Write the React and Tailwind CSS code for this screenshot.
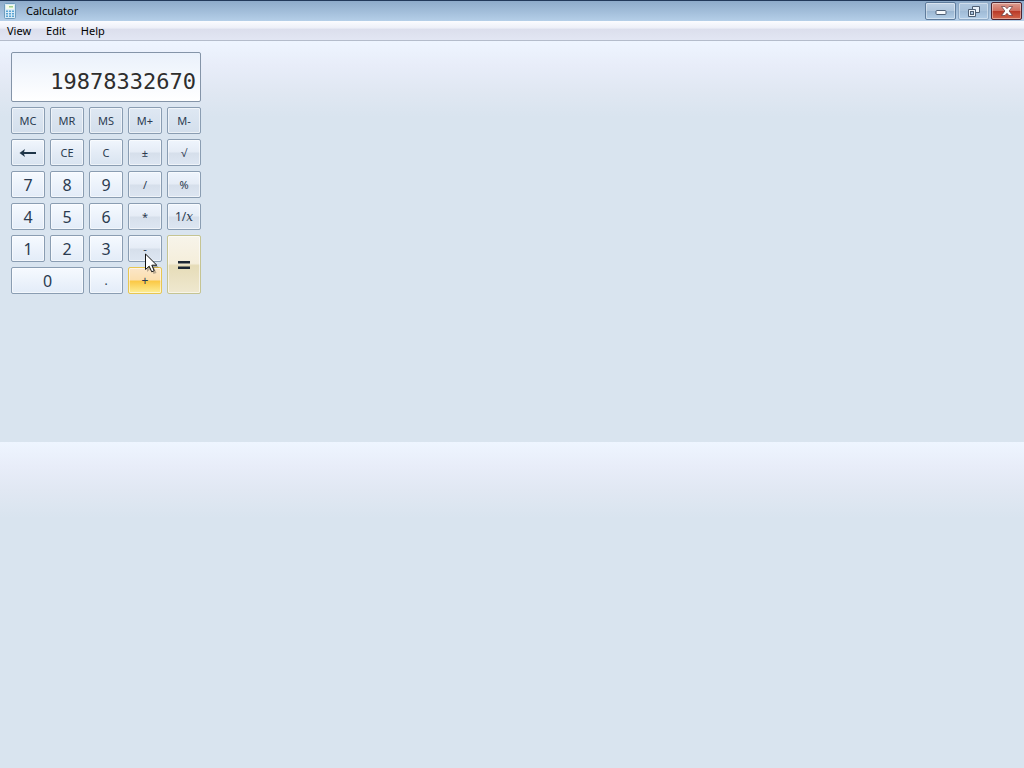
import React, { useState } from "react";

const memory = "text-[11px] border-[#8a9db2] bg-linear-to-b from-[#dfe8f3] to-[#d3dfec]";
const command =
  "text-[11px] border-[#8a9db2] bg-linear-to-b from-[#f1f6fd] from-0% via-[#e4ecf6] via-50% to-[#d9e4f0] to-100%";
const operator =
  "text-[11px] border-[#8a9db2] bg-[linear-gradient(to_bottom,#eff5fd_0%,#e5ecf6_48%,#d6dfeb_52%,#dde6f2_100%)]";
const digit = "text-base border-[#8a9db2] bg-linear-to-b from-[#f6faff] to-[#e3ecf8]";
const point = "text-xs border-[#8a9db2] bg-linear-to-b from-[#f6faff] to-[#e3ecf8]";
const hot =
  "text-xs border-[#e8c650] bg-[linear-gradient(to_bottom,#fbe6c8_0%,#fbdfae_48%,#fbc844_52%,#fdee96_100%)]";
const equals =
  "text-xl border-[#c5c492] bg-[linear-gradient(to_bottom,#f7f4ea_0%,#f5eedb_48%,#e6dcb8_52%,#efe8cf_100%)]";

function BackArrow() {
  return (
    <svg width="18" height="10" viewBox="0 0 18 10" aria-hidden="true">
      <path d="M0.500 5 L6 1 L5 4 H17 V6 H5 L6 9 Z" fill="#1f3548" />
    </svg>
  );
}

function Pointer() {
  return (
    <svg
      className="pointer-events-none absolute top-[18px] left-[17px] z-10"
      width="15"
      height="23"
      viewBox="0 0 15 23"
      aria-hidden="true"
    >
      <path d="M2 3 V19 L6 15.5 L8.5 21 L11.5 20 L9 14.5 H14 Z" fill="#000" opacity="0.25" />
      <path
        d="M0.5 1 V16.5 L4.2 13.2 L6.7 18.8 L9.2 17.7 L6.8 12.2 H11.8 Z"
        fill="#fff"
        stroke="#111"
        strokeWidth="1"
        strokeLinejoin="round"
      />
    </svg>
  );
}

const keys = [
  { label: "MC", look: memory },
  { label: "MR", look: memory },
  { label: "MS", look: memory },
  { label: "M+", look: memory },
  { label: "M-", look: memory },
  { label: <BackArrow />, name: "Backspace", look: command },
  { label: "CE", look: command },
  { label: "C", look: command },
  { label: "±", look: operator },
  { label: "√", look: operator },
  { label: "7", look: digit },
  { label: "8", look: digit },
  { label: "9", look: digit },
  { label: "/", look: operator },
  { label: "%", look: operator },
  { label: "4", look: digit },
  { label: "5", look: digit },
  { label: "6", look: digit },
  { label: "*", look: operator },
  {
    label: (
      <span className="text-xs">
        1/<i className="font-['DejaVu_Serif',serif]">x</i>
      </span>
    ),
    name: "Reciprocal",
    look: operator,
  },
  { label: "1", look: digit },
  { label: "2", look: digit },
  { label: "3", look: digit },
  { label: "-", look: operator, pointed: true },
  {
    label: (
      <svg width="12" height="8" viewBox="0 0 12 8" aria-hidden="true">
        <path d="M0 0H12V2.500H0ZM0 5.500H12V8H0Z" fill="#1c2633" />
      </svg>
    ),
    name: "Equals",
    look: equals,
    span: "row-span-2",
  },
  { label: "0", look: digit, span: "col-span-2" },
  { label: ".", look: point },
  { label: "+", look: hot },
];

function Key({ label, name, look, span = "", pointed }) {
  return (
    <div className={`relative flex ${span}`}>
      <button
        type="button"
        aria-label={name}
        className={`flex flex-1 items-center justify-center rounded-xs border leading-none text-[#2b3b50] inset-shadow-[0_0_0_1px_rgba(255,255,255,0.55)] ${look}`}
      >
        {label}
      </button>
      {pointed && <Pointer />}
    </div>
  );
}

function CalculatorIcon() {
  return (
    <svg width="12" height="16" viewBox="0 0 12 16" aria-hidden="true">
      <rect x="0.5" y="0.5" width="11" height="15" rx="1" fill="#d9ecf7" stroke="#6f9dbd" />
      <rect x="2" y="2" width="8" height="4" fill="#f5fbea" />
      <path d="M5 3H9V4.500H5Z" fill="#9ccf8d" />
      <path
        d="M2 7.500H4V9H2ZM5 7.500H7V9H5ZM8 7.500H10V9H8ZM2 10H4V11.500H2ZM5 10H7V11.500H5ZM8 10H10V11.500H8ZM2 12.500H4V14H2ZM5 12.500H7V14H5ZM8 12.500H10V14H8Z"
        fill="#58a3d3"
      />
    </svg>
  );
}

function TitleBar() {
  const frame =
    "flex h-[18px] w-[31px] items-center justify-center rounded-xs border inset-shadow-[0_0_0_1px_rgba(255,255,255,0.4)]";
  return (
    <header className="flex h-[21px] items-center border-t border-[#22395a] bg-linear-to-b from-[#8eabca] to-[#b5cfe8] pr-0.5 pl-1">
      <CalculatorIcon />
      <h1 className="ml-2.5 flex-1 text-[11px] text-black">Calculator</h1>
      <div className="flex gap-0.5">
        <button
          type="button"
          aria-label="Minimize"
          className={`${frame} border-[#5f7c9c] bg-[linear-gradient(to_bottom,#bfd2e6_0%,#b0c6dd_48%,#9bb6d1_52%,#b4cfe8_100%)]`}
        >
          <svg width="12" height="10" viewBox="0 0 12 10" aria-hidden="true">
            <rect x="1" y="4.500" width="10" height="4" rx="1" fill="#f6f9fc" stroke="#4e5f74" />
          </svg>
        </button>
        <button
          type="button"
          aria-label="Restore"
          className={`${frame} border-[#8ea9c5] bg-[linear-gradient(to_bottom,#b0c7df_0%,#a8c1da_48%,#a0bbd6_52%,#b2cde7_100%)]`}
        >
          <svg width="12" height="11" viewBox="0 0 12 11" aria-hidden="true">
            <path d="M4.500 0.500H11.500V6.500H4.500Z" fill="#e8f0f8" stroke="#4e5f74" />
            <path d="M0.500 3.500H7.500V10.500H0.500Z" fill="#f0f5fa" stroke="#4e5f74" />
            <rect x="2.500" y="5.500" width="3" height="3" fill="#a9c2dc" stroke="#4e5f74" />
          </svg>
        </button>
        <button
          type="button"
          aria-label="Close"
          className={`${frame} border-[#4d2430] bg-[linear-gradient(to_bottom,#dc9c90_0%,#cf6f60_48%,#b93a28_52%,#d2664c_100%)]`}
        >
          <svg width="12" height="10" viewBox="0 0 12 10" aria-hidden="true">
            <path
              d="M0.500 0.500H4L6 2.700L8 0.500H11.500L8.100 5L11.500 9.500H8L6 7.300L4 9.500H0.500L3.900 5Z"
              fill="#fff"
              stroke="#5f3a41"
              strokeWidth="0.7"
            />
          </svg>
        </button>
      </div>
    </header>
  );
}

export default function App() {
  const [value, setValue] = useState("19878332670");
  return (
    <div className="flex min-h-screen flex-col bg-[#d9e4ef] font-['Noto_Sans','Open_Sans',sans-serif]">
      <TitleBar />
      <nav className="flex h-5 items-center gap-[15px] border-b border-[#b4bccb] bg-[linear-gradient(to_bottom,#fbfcff_0%,#eef0f8_35%,#dcdfed_45%,#e2e6f3_100%)] pt-0.5 pl-[7px] text-[11px] text-black">
        <button type="button">View</button>
        <button type="button">Edit</button>
        <button type="button">Help</button>
      </nav>
      <main className="flex-1 bg-[linear-gradient(to_bottom,#eef5ff_0px,#e8edf9_24px,#e1e8f3_48px,#d9e4ef_76px,#d9e4ef_401px)] bg-size-[100%_401px] px-[11px] py-[11px]">
        <div className="grid w-[190px] gap-[5px]">
          <input
            aria-label="Result"
            readOnly
            value={value}
            onChange={(e) => setValue(e.target.value)}
            className="h-[50px] w-full rounded-xs border border-[#8494a8] bg-linear-to-b from-[#eaf1fb] to-white pt-2 pr-1 text-right font-['DejaVu_Sans_Mono','Liberation_Mono',monospace] text-[22px] text-[#2e2e2e] outline-none"
          />
          <div className="grid auto-rows-[27px] grid-cols-5 gap-[5px]">
            {keys.map((key, i) => (
              <Key key={i} {...key} />
            ))}
          </div>
        </div>
      </main>
    </div>
  );
}
